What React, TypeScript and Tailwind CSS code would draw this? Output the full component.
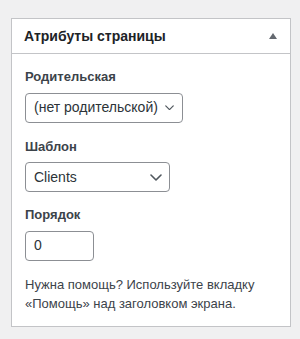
import React from 'react';

function Chevron({ size }: { size: number }) {
  return (
    <svg width={size} height={size / 2 + 1} viewBox="0 0 12 7" fill="none" className="shrink-0">
      <path d="M1 1l5 5 5-5" stroke="#50575e" strokeWidth="1.6" strokeLinecap="round" strokeLinejoin="round" />
    </svg>
  );
}

function SelectBox({ value, width, chevron, gap }: { value: string; width: string; chevron: number; gap: string }) {
  return (
    <div
      className={`${width} h-[30px] flex items-center justify-between border border-[#8c8f94] rounded-[4px] bg-white pl-[8px] ${gap} text-[14px] text-[#2c3338]`}
    >
      <span className="whitespace-nowrap">{value}</span>
      <Chevron size={chevron} />
    </div>
  );
}

export default function App() {
  return (
    <div className="min-h-[339px] w-[300px] bg-[#f0f0f1] pt-[18px] pl-[11px] font-['Liberation_Sans',Arial,sans-serif]">
      <div className="w-[280px] bg-white border border-[#c3c4c7]">
        <div className="h-[35px] flex items-center justify-between pl-[12px] pr-[12px] border-b border-[#c3c4c7]">
          <h2 className="text-[14px] font-bold text-[#1d2327] leading-none">Атрибуты страницы</h2>
          <svg width="8" height="6" viewBox="0 0 8 6" className="mr-[1px]">
            <polygon points="4,0 8,6 0,6" fill="#646970" />
          </svg>
        </div>
        <div className="pl-[13px] pr-[12px] pb-[13px] text-[13px] leading-[1.5] text-[#3c434a]">
          <p className="mt-[13px] mb-[6px] font-bold">Родительская</p>
          <SelectBox value="(нет родительской)" width="w-[158px]" chevron={9} gap="pr-[8px]" />
          <p className="mt-[14px] mb-[6px] font-bold">Шаблон</p>
          <SelectBox value="Clients" width="w-[145px]" chevron={12} gap="pr-[7px]" />
          <p className="mt-[13px] mb-[6px] font-bold">Порядок</p>
          <div className="w-[69px] h-[30px] flex items-center border border-[#8c8f94] rounded-[4px] pl-[8px] text-[14px] text-[#2c3338]">
            0
          </div>
          <p className="mt-[14px] leading-[19px]">
            Нужна помощь? Используйте вкладку
            <br />
            «Помощь» над заголовком экрана.
          </p>
        </div>
      </div>
    </div>
  );
}
